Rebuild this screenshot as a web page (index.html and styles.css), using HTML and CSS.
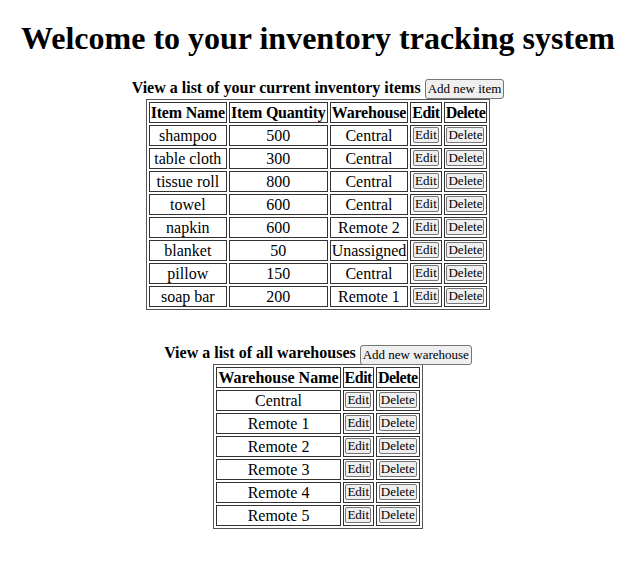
FILE: index.html
```html
<!DOCTYPE html>
<html>
<head>
<meta charset="utf-8">
<link rel="stylesheet" href="styles.css">
</head>
<body>
<h1 class="title">Welcome to your inventory tracking system</h1>
<div class="section">
<div class="heading"><b>View a list of your current inventory items</b> <button class="btn">Add new item</button></div>
<table class="grid">
<tr><th>Item Name</th><th>Item Quantity</th><th>Warehouse</th><th class="narrow">Edit</th><th class="narrow">Delete</th></tr>
<tr><td>shampoo</td><td>500</td><td>Central</td><td><button class="btn sm">Edit</button></td><td><button class="btn sm">Delete</button></td></tr>
<tr><td>table cloth</td><td>300</td><td>Central</td><td><button class="btn sm">Edit</button></td><td><button class="btn sm">Delete</button></td></tr>
<tr><td>tissue roll</td><td>800</td><td>Central</td><td><button class="btn sm">Edit</button></td><td><button class="btn sm">Delete</button></td></tr>
<tr><td>towel</td><td>600</td><td>Central</td><td><button class="btn sm">Edit</button></td><td><button class="btn sm">Delete</button></td></tr>
<tr><td>napkin</td><td>600</td><td>Remote 2</td><td><button class="btn sm">Edit</button></td><td><button class="btn sm">Delete</button></td></tr>
<tr><td>blanket</td><td>50</td><td>Unassigned</td><td><button class="btn sm">Edit</button></td><td><button class="btn sm">Delete</button></td></tr>
<tr><td>pillow</td><td>150</td><td>Central</td><td><button class="btn sm">Edit</button></td><td><button class="btn sm">Delete</button></td></tr>
<tr><td>soap bar</td><td>200</td><td>Remote 1</td><td><button class="btn sm">Edit</button></td><td><button class="btn sm">Delete</button></td></tr>
</table>
</div>
<div class="section second">
<div class="heading"><b>View a list of all warehouses</b> <button class="btn">Add new warehouse</button></div>
<table class="grid">
<tr><th class="wide">Warehouse Name</th><th class="narrow">Edit</th><th class="narrow">Delete</th></tr>
<tr><td>Central</td><td><button class="btn sm">Edit</button></td><td><button class="btn sm">Delete</button></td></tr>
<tr><td>Remote 1</td><td><button class="btn sm">Edit</button></td><td><button class="btn sm">Delete</button></td></tr>
<tr><td>Remote 2</td><td><button class="btn sm">Edit</button></td><td><button class="btn sm">Delete</button></td></tr>
<tr><td>Remote 3</td><td><button class="btn sm">Edit</button></td><td><button class="btn sm">Delete</button></td></tr>
<tr><td>Remote 4</td><td><button class="btn sm">Edit</button></td><td><button class="btn sm">Delete</button></td></tr>
<tr><td>Remote 5</td><td><button class="btn sm">Edit</button></td><td><button class="btn sm">Delete</button></td></tr>
</table>
</div>
</body>
</html>
```
FILE: styles.css
```css
body {
  margin: 8px 14px 8px 8px;
  font-family: "Liberation Serif", "Times New Roman", serif;
  font-size: 16px;
  color: #000;
  background: #fff;
}
.title {
  text-align: center;
  font-size: 32px;
  margin: 12px 0 21px;
}
.section {
  text-align: center;
}
.heading {
  white-space: nowrap;
  line-height: 20px;
}
.grid {
  margin: 0 auto;
  border: 1px solid #555;
  border-spacing: 2px;
  text-align: center;
  line-height: 17px;
}
.grid th, .grid td {
  border: 1px solid #333;
  padding: 1px;
}
.grid th {
  letter-spacing: -0.2px;
}
.grid th.narrow {
  letter-spacing: -0.5px;
}
.grid th.wide {
  letter-spacing: 0;
}
.second {
  margin-top: 33px;
}
.second .heading {
  margin-bottom: -1px;
}
.btn {
  font-family: "Liberation Serif", "Times New Roman", serif;
  font-size: 13px;
  line-height: 16px;
  padding: 1px 2px;
  border: 1px solid #767676;
  border-radius: 3px;
  background: #efefef;
  color: #000;
  vertical-align: middle;
}
.sm {
  line-height: 14px;
  padding: 0 1px;
  border-radius: 2px;
  vertical-align: top;
}
```
